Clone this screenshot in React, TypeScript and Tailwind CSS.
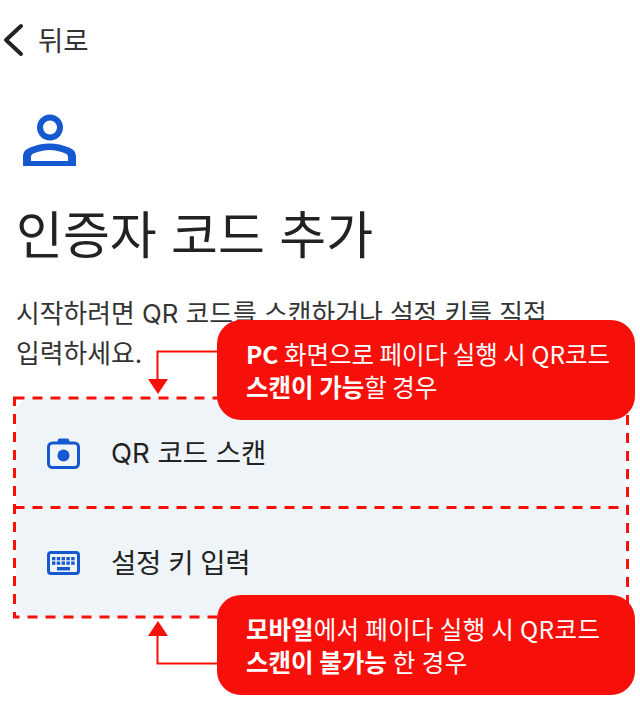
import React from 'react';

const KR = 'font-["Inter","Noto_Sans_CJK_KR",sans-serif]';
const NOTE = 'font-["Noto_Sans_CJK_KR",sans-serif]';

function BackIcon() {
  return (
    <svg width="24" height="36" viewBox="0 0 24 36" fill="none">
      <path d="M21 4 6 18l15 14" stroke="#222" strokeWidth="4" strokeLinecap="round" strokeLinejoin="round" />
    </svg>
  );
}

function UserIcon() {
  return (
    <svg width="54" height="54" viewBox="0 0 54 54" fill="none">
      <circle cx="27" cy="14.500" r="10" stroke="#1558d0" strokeWidth="6" />
      <path d="M0 53V44c0-5 2.500-7.500 6.500-9.200C13 32 20 30.500 26.500 30.500S40 32 46.500 34.800c4 1.700 6.500 4.200 6.500 9.200v9H0Z" fill="#1558d0" />
      <path d="M8 48v-4c0-1.800 1-2.800 2.500-3.500C16 38.200 21 37 26.500 37S37 38.200 42.500 40.500c1.500.7 2.500 1.700 2.500 3.500v4H8Z" fill="#fff" />
    </svg>
  );
}

function CameraIcon() {
  return (
    <svg width="34" height="31" viewBox="0 0 34 31" fill="none">
      <path d="M9.500 6 11 1.800C11.300 1 12 .5 13 .5h7c1 0 1.700.5 2 1.300L23.500 6Z" fill="#1558d0" />
      <rect x="1.500" y="5" width="30" height="24.500" rx="4" fill="#eff4f9" stroke="#1558d0" strokeWidth="3" />
      <circle cx="16.500" cy="17.500" r="6" fill="#1558d0" />
    </svg>
  );
}

function KeyboardIcon() {
  const keys: number[][] = [];
  for (let r = 0; r < 2; r++) for (let c = 0; c < 5; c++) keys.push([5 + c * 4.800, 6 + r * 4.500]);
  return (
    <svg width="34" height="24" viewBox="0 0 34 24" fill="none">
      <rect x="1.500" y="1.500" width="30" height="21" rx="2.500" fill="#eff4f9" stroke="#1558d0" strokeWidth="3" />
      {keys.map(([x, y]) => (
        <rect key={`${x}-${y}`} x={x} y={y} width="3.400" height="3.300" fill="#1558d0" />
      ))}
      <rect x="10" y="16" width="13" height="3.400" fill="#1558d0" />
    </svg>
  );
}

function Option({ icon, label, className }: { icon: React.ReactNode; label: string; className?: string }) {
  return (
    <div className="flex h-[110px] items-center bg-[#eff4f9]">
      <div className="flex w-[95px] justify-center">{icon}</div>
      <span className={`pt-[2px] text-[27.500px] leading-none text-[#222] ${KR} ${className ?? ''}`}>{label}</span>
    </div>
  );
}

// red annotations drawn over the screenshot
function Annotations() {
  return (
    <svg className="absolute left-0 top-0" width="640" height="720" fill="none">
      <path d="M14.500 398H627.500V617H14.500Z M14.500 507.500H627.500" stroke="#f7100a" strokeWidth="3" strokeDasharray="10 8" />
      <path d="M217 351.500H157.500V382" stroke="#f7100a" strokeWidth="2" />
      <path d="M148 379H168L158 394Z" fill="#f7100a" />
      <path d="M217 663.500H157.500V634" stroke="#f7100a" strokeWidth="2" />
      <path d="M148 636H168L158 621Z" fill="#f7100a" />
    </svg>
  );
}

function Callout({ className, children }: { className: string; children: React.ReactNode }) {
  return (
    <div className={`absolute left-[217px] flex h-[100px] w-[418px] flex-col justify-center rounded-[24px] bg-[#f7100a] pl-[29px] text-[24.500px] leading-[33px] text-white ${NOTE} ${className}`}>
      {children}
    </div>
  );
}

export default function App() {
  return (
    <div className="relative h-[720px] w-[640px] overflow-hidden bg-white">
      <div className="flex h-[80px] items-center">
        <BackIcon />
        <span className={`ml-[14px] pt-[3px] text-[27.500px] text-[#333] ${KR}`}>뒤로</span>
      </div>
      <div className="ml-[23px] mt-[33px]">
        <UserIcon />
      </div>
      <h1 className={`ml-[16px] mt-[34px] text-[51px] font-normal leading-[70px] text-[#222] ${KR}`}>인증자 코드 추가</h1>
      <p className={`mx-[16px] mt-[23px] text-[25.800px] leading-[40px] text-[#333] ${KR}`}>
        시작하려면 QR 코드를 스캔하거나 설정 키를 직접
        <br />
        입력하세요.
      </p>
      <div className="ml-[16px] mt-[24px] w-[609px] overflow-hidden rounded-[16px]">
        <Option icon={<CameraIcon />} label="QR 코드 스캔" />
        <Option icon={<KeyboardIcon />} label="설정 키 입력" className="tracking-[-0.4px]" />
      </div>
      <Annotations />
      <Callout className="top-[320px]">
        <div><b>PC</b> 화면으로 페이다 실행 시 QR코드</div>
        <div><b>스캔이 가능</b>할 경우</div>
      </Callout>
      <Callout className="top-[595px]">
        <div><b>모바일</b><span className="tracking-[0.35px]">에서 페이다 실행 시 QR코드</span></div>
        <div><b>스캔이 불가능</b><span className="tracking-[0.5px]"> 한 경우</span></div>
      </Callout>
    </div>
  );
}
